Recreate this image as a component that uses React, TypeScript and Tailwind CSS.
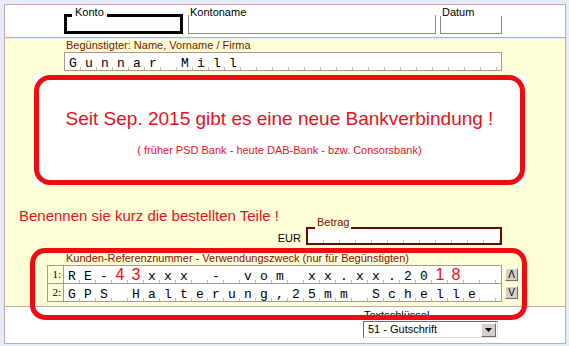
const sans = "font-['Liberation_Sans',Arial,sans-serif]";

function Slots({ text, red = [] }: { text: string; red?: number[] }) {
  return (
    <div className="whitespace-pre leading-[17px]">
      {Array.from(text).map((ch, i) => (
        <span
          key={i}
          className={
            red.includes(i)
              ? "inline-block w-[16px] text-center font-['Liberation_Sans',Arial,sans-serif] text-[16px] text-[#e8101a]"
              : "inline-block w-[16px] text-center font-['Liberation_Mono',monospace] text-[13px] text-black"
          }
        >
          {ch}
        </span>
      ))}
    </div>
  );
}

function Ticks() {
  return (
    <div className="pointer-events-none absolute bottom-0 left-0 right-0 h-[3px] bg-[repeating-linear-gradient(90deg,transparent_0px,transparent_15px,#c4bcb4_15px,#c4bcb4_16px)]" />
  );
}

function SpinButton({ glyph }: { glyph: string }) {
  return (
    <div className="flex h-[13px] w-[13px] items-center justify-center border border-b-[#6e6e6e] border-l-white border-r-[#6e6e6e] border-t-white bg-[#d4d0c8] text-[10px] leading-none text-black">
      {glyph}
    </div>
  );
}

export default function App() {
  return (
    <div className={`h-[346px] w-[569px] bg-[#e4ecf8] pl-[4px] pt-[4px] text-black ${sans}`}>
      <div className="relative w-[562px] border border-[#c8a8a8]">
        {/* Konto / Kontoname / Datum */}
        <div className="flex h-[33px] items-end border-b border-[#c8a8a8] bg-white pb-[3px] pl-[59px] text-[11px] leading-[13px]">
          <div className="relative h-[20px] w-[119px] border-[3px] border-black">
            <span className="absolute left-[5px] top-[-11px] bg-white px-[3px]">Konto</span>
          </div>
          <div className="relative ml-[5px] h-[19px] w-[248px] border-b border-l border-r border-[#8a8a8a]">
            <span className="absolute left-[1px] top-[-9px] bg-white">Kontoname</span>
          </div>
          <div className="relative ml-[4px] h-[18px] w-[62px] border-b border-l border-r border-[#8a8a8a]">
            <span className="absolute left-[1px] top-[-10px] bg-white">Datum</span>
          </div>
        </div>

        {/* Begünstigter und Hinweise */}
        <div className="h-[268px] border-b border-[#c8a8a8] bg-[#ffffd7]">
          <div className="ml-[61px] mt-[1px] text-[11px] leading-[13px] text-[#801000]">
            Begünstigter: Name, Vorname / Firma
          </div>
          <div className="relative ml-[59px] h-[19px] w-[438px] border border-[#a89890] bg-white">
            <Slots text="Gunnar Mill" />
            <Ticks />
          </div>

          <div className="ml-[29px] mt-[4px] h-[110px] w-[491px] bg-white">
            <div className="flex h-full flex-col items-center rounded-[16px] border-[5px] border-[#ee0c12] pt-[28px] text-[#e4121e]">
              <div className="text-[19px] leading-[22px]">Seit Sep. 2015 gibt es eine neue Bankverbindung !</div>
              <div className="mt-[14px] text-[11px] leading-[13px]">
                ( früher PSD Bank - heute DAB-Bank - bzw. Consorsbank)
              </div>
            </div>
          </div>

          <div className="mt-[22px] pl-[14px] text-[15px] leading-[18px] text-[#e4121e]">
            Benennen sie kurz die bestellten Teile !
          </div>

          <div className="mt-[2px] flex items-end justify-end pr-[63px]">
            <span className="mr-[5px] text-[11px] leading-[13px]">EUR</span>
            <div className="relative h-[18px] w-[196px] border-2 border-[#6b0a00] bg-white">
              <span className="absolute left-[7px] top-[-13px] bg-[#ffffd7] px-[2px] text-[11px] leading-[13px] text-[#801000]">
                Betrag
              </span>
              <Ticks />
            </div>
          </div>

          <div className="mt-[7px] pl-[61px] text-[11px] leading-[13px] text-[#801000]">
            Kunden-Referenznummer - Verwendungszweck (nur für Begünstigten)
          </div>

          <div className="flex pl-[42px]">
            <div className="w-[455px] border border-[#a89890]">
              <div className="flex h-[17px]">
                <div className="w-[16px] border-r border-[#a89890] pr-[2px] text-right font-['Liberation_Serif',serif] text-[11px] leading-[17px]">1:</div>
                <div className="relative flex-1 bg-white">
                  <Slots text="RE-43xxx - vom xx.xx.2018" red={[3, 4, 23, 24]} />
                  <Ticks />
                </div>
              </div>
              <div className="flex h-[18px] border-t border-[#a89890]">
                <div className="w-[16px] border-r border-[#a89890] pr-[2px] text-right font-['Liberation_Serif',serif] text-[11px] leading-[17px]">2:</div>
                <div className="relative flex-1 bg-white">
                  <Slots text="GPS Halterung,25mm Schelle" />
                  <Ticks />
                </div>
              </div>
            </div>
            <div className="ml-[3px] flex flex-col gap-[5px] pt-[3px]">
              <SpinButton glyph="Λ" />
              <SpinButton glyph="V" />
            </div>
          </div>
        </div>

        {/* Textschlüssel */}
        <div className="h-[36px] bg-white pl-[358px] pt-[2px] text-[11px]">
          <div className="ml-[1px] leading-[12px]">Textschlüssel</div>
          <div className="flex h-[17px] w-[135px] items-center border border-b-[#e0e0e0] border-l-[#6a6a6a] border-r-[#e0e0e0] border-t-[#6a6a6a] bg-white pl-[4px]">
            <span className="flex-1 leading-[15px]">51 - Gutschrift</span>
            <div className="mr-[1px] flex h-[14px] w-[15px] items-center justify-center border border-b-[#6e6e6e] border-l-white border-r-[#6e6e6e] border-t-white bg-[#d4d0c8]">
              <svg width="7" height="4" viewBox="0 0 7 4">
                <path d="M0 0h7L3.5 4z" fill="#000" />
              </svg>
            </div>
          </div>
        </div>

        {/* Hervorhebung Verwendungszweck */}
        <div className="pointer-events-none absolute left-[25px] top-[243px] h-[72px] w-[497px] rounded-[15px] border-[5px] border-[#ee0c12]" />
      </div>
    </div>
  );
}
